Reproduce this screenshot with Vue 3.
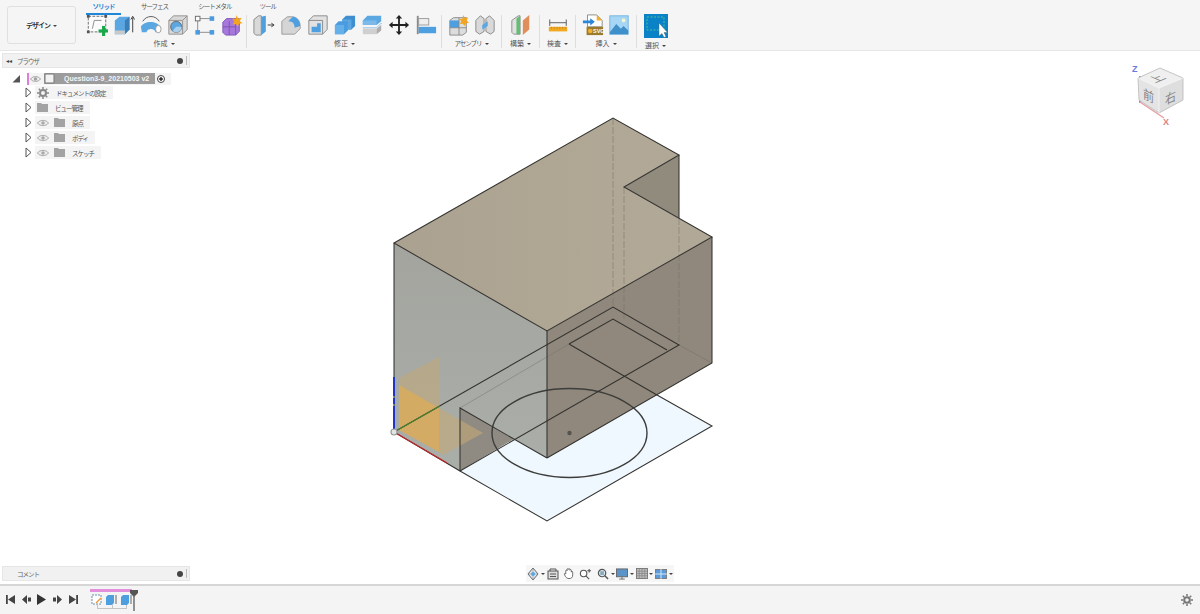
<script setup>
const tabs = [
  { label: 'ソリッド', active: true },
  { label: 'サーフェス' },
  { label: 'シート メタル' },
  { label: 'ツール' },
]
const rows = [
  { label: 'ドキュメントの設定', eye: false, gear: true },
  { label: 'ビュー管理', eye: false },
  { label: '原点', eye: true },
  { label: 'ボディ', eye: true },
  { label: 'スケッチ', eye: true },
]
</script>

<template>
  <div class="app">
    <header class="toolbar">
      <button class="design">デザイン<i class="caret"></i></button>
      <div class="ribbon">
        <nav class="tabs">
          <span v-for="t in tabs" :key="t.label" class="tab" :class="{ active: t.active }">{{ t.label }}</span>
        </nav>
        <div class="groups">
          <section class="group g-create">
            <div class="icons">
              <svg class="ic" viewBox="0 0 24 24"><rect x="2.500" y="2.500" width="19" height="17" fill="#fbfbfb" stroke="#666" stroke-dasharray="3 1.500"/><path d="M7 16L9 7H17" fill="none" stroke="#888"/><path d="M1 1h3v3H1zM20 1h3v3h-3zM1 18h3v3H1z" fill="#555"/><rect x="17.500" y="13" width="3.400" height="11" fill="#19a84a"/><rect x="13.700" y="16.800" width="10.300" height="3.400" fill="#19a84a"/></svg>
              <svg class="ic" viewBox="0 0 24 24"><path d="M2 7L7 3H18V17L13 22H2Z" fill="#5aa7e2"/><path d="M13 7V22L18 17V3Z" fill="#3b7fb8"/><path d="M2 18H13V22H2Z" fill="#c9c9c9"/><path d="M21.500 20V4M19.500 6L21.500 2.500L23.500 6" fill="none" stroke="#333"/></svg>
              <svg class="ic" viewBox="0 0 24 24"><path d="M3 8C7 1 17 1 21 8" fill="none" stroke="#555" stroke-width="1"/><path d="M1 14C4 7 19 7 22 14L21 20H17C16 15 8 15 7 20H2Z" fill="#5aa7e2"/><ellipse cx="20" cy="16.500" rx="3" ry="4" fill="#fff" stroke="#999"/></svg>
              <svg class="ic" viewBox="0 0 24 24"><path d="M2 7L7 2H22V17L17 22H2Z" fill="#d8d8d8" stroke="#8f8f8f"/><path d="M2 7H17V22M17 7L22 2" fill="none" stroke="#8f8f8f"/><circle cx="10" cy="14" r="6" fill="#5aa7e2" stroke="#666"/><path d="M10 14L16 14A6 6 0 0 1 6 18.500Z" fill="#a9cfee"/></svg>
              <svg class="ic" viewBox="0 0 24 24"><path d="M5 5H19M4 6V19M5 20H19" fill="none" stroke="#888"/><rect x="1.500" y="2.500" width="5" height="5" fill="#fff" stroke="#666"/><rect x="17" y="2.500" width="5" height="5" fill="#4a9be0"/><rect x="1.500" y="17.500" width="5" height="5" fill="#4a9be0"/><rect x="17" y="17.500" width="5" height="5" fill="#4a9be0"/></svg>
              <svg class="ic" viewBox="0 0 24 24"><path d="M2 9L6 5H20V19L16 23H5L2 20Z" fill="#a678dc" stroke="#8157b8"/><path d="M2 14H16M9 8V23M16 9V23" stroke="#7c52b4" fill="none"/><path d="M17 1L18.500 5L22.500 4L20.500 7.500L23.500 10L19.500 10.500L18.500 14L16 11L12.500 11.500L14.500 8L12 5L16 5.500Z" fill="#f3a51f"/></svg>
            </div>
            <div class="glabel">作成<i class="caret"></i></div>
          </section>
          <section class="group g-modify">
            <div class="icons">
              <svg class="ic" viewBox="0 0 24 24"><path d="M1 6L6 2H9V23H3L1 21Z" fill="#d9d9d9" stroke="#888"/><path d="M9 3L14 2V19L9 23Z" fill="#4d9fe0"/><path d="M16 12H22M20 10L23 12L20 14" fill="none" stroke="#333"/></svg>
              <svg class="ic" viewBox="0 0 24 24"><path d="M2 8L8 3H14C20 4 22 9 22 13V16L16 22H2Z" fill="#d5d5d5" stroke="#999"/><path d="M14 3C20 4 22 9 22 13L16 15C16 11 14 8 9 8Z" fill="#4d9fe0"/></svg>
              <svg class="ic" viewBox="0 0 24 24"><path d="M2 7L7 2H22V17L17 22H2Z" fill="#e2e2e2" stroke="#888"/><path d="M2 7H17V22" fill="none" stroke="#888"/><path d="M5 20V14H11V10H15V20Z" fill="#4d9fe0"/></svg>
              <svg class="ic" viewBox="0 0 24 24"><path d="M9 6L13 2H23V13L19 17H9Z" fill="#3f8fd0"/><path d="M9 6H19V17H9Z" fill="#5aa7e2"/><path d="M1 12L5 8H15V18L11 22H1Z" fill="#4a9be0"/><path d="M1 12H11V22H1Z" fill="#66b0ea"/></svg>
              <svg class="ic" viewBox="0 0 24 24"><path d="M2 7L7 2H22V8L17 12H2Z" fill="#5aa7e2"/><path d="M2 7H17V12H2Z" fill="#7ab9ea"/><path d="M2 15H17L22 10V11" fill="none" stroke="#8cc0ea"/><path d="M2 16H17V22H2Z" fill="#cfcfcf"/><path d="M17 16L22 12V18L17 22Z" fill="#adadad"/></svg>
              <svg class="ic" viewBox="0 0 24 24"><path d="M12 1L15.500 5H13V11H19V8.500L23 12L19 15.500V13H13V19H15.500L12 23L8.500 19H11V13H5V15.500L1 12L5 8.500V11H11V5H8.500Z" fill="#222"/></svg>
              <svg class="ic" viewBox="0 0 24 24"><rect x="2" y="2" width="2" height="20" fill="#8a8a8a"/><rect x="4" y="5" width="11" height="7" fill="#eee" stroke="#999"/><rect x="4" y="14" width="19" height="7" fill="#4d9fe0"/></svg>
            </div>
            <div class="glabel">修正<i class="caret"></i></div>
          </section>
          <section class="group g-assembly">
            <div class="icons tight">
              <svg class="ic" viewBox="0 0 24 24"><path d="M2 7L6 4H20V20L16 23H2Z" fill="#ddd" stroke="#888"/><path d="M2 7H12V15H2Z" fill="#4d9fe0"/><path d="M12 4V23M2 15H20" stroke="#888" fill="none"/><path d="M17 1L18.300 4.500L22 3.500L20.300 7L23 9.500L19.500 10L18.500 13L16 10.500L13 11L14.500 8L12.500 5.500L15.500 5.500Z" fill="#f3a51f"/></svg>
              <svg class="ic" viewBox="0 0 24 24"><path d="M2 7L7 2L11 5V19L6 22L2 19Z" fill="#d9d9d9" stroke="#888"/><path d="M22 7L17 2L13 5V19L18 22L22 19Z" fill="#d9d9d9" stroke="#888"/><path d="M9 12L15 8V13L9 17Z" fill="#5aa7e2"/></svg>
            </div>
            <div class="glabel kana">アセンブリ<i class="caret"></i></div>
          </section>
          <section class="group g-build">
            <div class="icons">
              <svg class="ic" viewBox="0 0 24 24"><path d="M2 7L9 2H11V22H4L2 20Z" fill="#e2e2e2" stroke="#8a8a8a"/><path d="M7 5L11 2V22L7 22Z" fill="#63bd73"/><path d="M14 7L21 1V17L14 23Z" fill="#e08f5c"/></svg>
            </div>
            <div class="glabel">構築<i class="caret"></i></div>
          </section>
          <section class="group g-inspect">
            <div class="icons">
              <svg class="ic" viewBox="0 0 24 24"><path d="M3 6V13M21 6V13M3 9.500H21" stroke="#555" fill="none"/><rect x="2" y="14" width="20" height="5" fill="#f2a922"/><path d="M5 14v2M8 14v2M11 14v2M14 14v2M17 14v2M20 14v2" stroke="#a9720f" stroke-width=".6"/></svg>
            </div>
            <div class="glabel">検査<i class="caret"></i></div>
          </section>
          <section class="group g-insert">
            <div class="icons tight">
              <svg class="ic" viewBox="0 0 24 24"><path d="M6 1H16L22 7V14H6Z" fill="#fff" stroke="#888"/><path d="M16 1V7H22Z" fill="#f0b030"/><path d="M1 7H9V4.500L14 8.500L9 12.500V10H1Z" fill="#2a86d8"/><rect x="5" y="14" width="18" height="9" fill="#9b7b2c"/><circle cx="9" cy="18.500" r="2.500" fill="#f0b030"/><text x="12" y="21" class="svgt">SVG</text></svg>
              <svg class="ic" viewBox="0 0 24 24"><rect x="2" y="2" width="20" height="20" fill="#a7d6f4" stroke="#6fb2e2"/><path d="M2 20L9 11L14 16L17 13L22 18V22H2Z" fill="#3f8fcb"/><circle cx="17" cy="7" r="2" fill="#f3f6d6"/></svg>
            </div>
            <div class="glabel">挿入<i class="caret"></i></div>
          </section>
          <section class="group g-select">
            <div class="icons">
              <svg class="ic" viewBox="0 0 24 24"><rect width="24" height="24" fill="#0a82c8"/><rect x="3" y="3" width="17" height="13" fill="none" stroke="#4ac09c" stroke-dasharray="2 1.500"/><path d="M15 9V22L18 19.500L20 23.500L22 22.500L20 18.500H23.500Z" fill="#fff" stroke="#555" stroke-width=".4"/></svg>
            </div>
            <div class="glabel">選択<i class="caret"></i></div>
          </section>
        </div>
      </div>
    </header>

    <main class="stage">
      <svg class="model" viewBox="0 0 1200 534" width="1200" height="534">
        <defs>
          <linearGradient id="topface" x1="0" x2="1" y1="0" y2="0">
            <stop offset="0" stop-color="#aba190"/>
            <stop offset=".5" stop-color="#b0a694"/>
            <stop offset="1" stop-color="#b1a998"/>
          </linearGradient>
          <linearGradient id="leftface" x1="0" x2="0" y1="0" y2="1">
            <stop offset="0" stop-color="#a3a49e"/>
            <stop offset="1" stop-color="#aaaea9"/>
          </linearGradient>
        </defs>
        <g transform="translate(0 -51)">
          <polygon points="460,471 514,439 547,458 657,395 712,426 547,521" fill="#eff8fe"/>
          <polygon points="394,243 547,331 547,458 514,439 460,408 460,471 394,432" fill="url(#leftface)"/>
          <polygon points="460,408 514,439 460,471" fill="#8f8b83"/>
          <polygon points="394,243 613,118 679,155 624,187 712,237 547,331" fill="url(#topface)"/>
          <polygon points="624,187 679,155 679,218" fill="#918b7e"/>
          <polygon points="547,331 712,237 712,363 547,458" fill="#90887c"/>
          <polygon points="399,378 439,357 439,408 399,431" fill="#c3a876" fill-opacity=".55"/>
          <polygon points="399,385 439,408 439,452 399,430" fill="#d7ab5d" fill-opacity=".9"/>
          <polygon points="439,408 483,433 443,455 439,452" fill="#c3a876" fill-opacity=".6"/>
          <g fill="none" stroke="#6f6a60" stroke-width="1" stroke-opacity=".45">
            <path d="M613 118V307" stroke-dasharray="7 2"/>
            <path d="M624 187V319" stroke-dasharray="7 2"/>
            <path d="M679 218V345" stroke-dasharray="7 2"/>
            <path d="M679 345L712 363"/>
            <path d="M460 408L569 344" stroke="#6e706b"/>
          </g>
          <g fill="none" stroke="#33322f" stroke-width="1.050">
            <ellipse cx="569.500" cy="433" rx="77.500" ry="44.500" stroke="#3d3d3b" stroke-width="1.400"/>
            <path d="M394 243L613 118L679 155L624 187L712 237L547 331L394 243Z"/>
            <path d="M679 155V218M712 237V363L547 458M547 331V458M394 243V432L460 471V408L547 458"/>
            <path d="M394 432L613 307L679 345L460 471"/>
            <path d="M569 344L613 319L667 350M569 344L624 376L657 395"/>
            <path d="M460 471L547 521L712 426L657 395"/>
          </g>
          <circle cx="569.500" cy="433" r="2.200" fill="#55534e"/>
          <path d="M394 432V377" stroke="#1f35c8" stroke-width="2" stroke-dasharray="26 2 6 2 20"/>
          <path d="M394 432L440 406" stroke="#4b8530" stroke-width="1.200"/>
          <path d="M394 432L447 463" stroke="#c02828" stroke-width="1.300"/>
          <circle cx="394" cy="432" r="3" fill="#e4e4e4" stroke="#9a9a9a" stroke-width="1.200"/>
        </g>
      </svg>

      <svg class="cube" viewBox="0 0 80 75" width="80" height="75">
        <path d="M20 48V21" stroke="#6a78e0" stroke-width="1.500"/>
        <path d="M20 47L44 63" stroke="#e7a0a0" stroke-width="1.500"/>
        <path d="M18 23L40 13L63 23L39 33Z" fill="#efefef"/>
        <path d="M18 23L39 33V58L19 45Z" fill="#e4e4e4"/>
        <path d="M63 23L39 33V58L63 45Z" fill="#dedede"/>
        <path d="M18 23L40 13L63 23V45L39 58L19 45Z" fill="none" stroke="#b8b8b8" stroke-width=".8"/>
        <path d="M18 23L39 33L63 23M39 33V58" fill="none" stroke="#f5f5f5" stroke-width=".8"/>
        <text x="12" y="17" class="cube-z">Z</text>
        <text x="43" y="70" class="cube-x">X</text>
        <text class="cube-t" transform="matrix(.9 -.38 .9 .38 35 28)">上</text>
        <text class="cube-t" transform="matrix(.85 .4 0 1 23 43)">前</text>
        <text class="cube-t" transform="matrix(.85 -.4 0 1 45 50)">右</text>
      </svg>

      <aside class="browser">
        <div class="panel-head">
          <span class="rew">◂◂</span>
          <span class="panel-title">ブラウザ</span>
          <span class="dot"></span>
          <span class="grip"></span>
        </div>
        <div class="root-row">
          <svg class="corner" viewBox="0 0 9 9" width="9" height="9"><path d="M0.500 8.500L8 1V8.500Z" fill="#555"/></svg>
          <div class="root-chip">
            <span class="pink"></span>
            <svg class="eye" viewBox="0 0 12 8" width="11" height="8"><path d="M0.500 4C3 0.500 9 0.500 11.500 4C9 7.500 3 7.500 0.500 4Z" fill="#eee" stroke="#a0a0a0"/><circle cx="6" cy="4" r="1.800" fill="#a0a0a0"/></svg>
            <svg class="doc" viewBox="0 0 11 11" width="11" height="11"><rect x="1" y="1" width="9" height="9" rx="1" fill="#f2f2f2" stroke="#777"/></svg>
            <span class="root-label">Question3-9_20210503 v2</span>
            <span class="radio"></span>
          </div>
        </div>
        <div v-for="r in rows" :key="r.label" class="row">
          <svg class="tri" viewBox="0 0 7 11" width="7" height="11"><path d="M1 1L6 5.500L1 10Z" fill="#fff" stroke="#555"/></svg>
          <div class="chip">
            <svg v-if="r.eye" class="eye" viewBox="0 0 12 8" width="12" height="8"><path d="M0.500 4C3 0.500 9 0.500 11.500 4C9 7.500 3 7.500 0.500 4Z" fill="#eee" stroke="#aaa"/><circle cx="6" cy="4" r="1.800" fill="#aaa"/></svg>
            <svg v-if="r.gear" class="folder" viewBox="0 0 12 12" width="12" height="12"><circle cx="6" cy="6" r="3" fill="none" stroke="#888" stroke-width="2"/><path d="M6 0V12M0 6H12M1.800 1.800L10.200 10.200M10.200 1.800L1.800 10.200" stroke="#888" stroke-width="1.500" stroke-dasharray="2 8"/></svg>
            <svg v-else class="folder" viewBox="0 0 11 9" width="11" height="9"><path d="M0 0H4L5 1H11V9H0Z" fill="#a3a3a3"/></svg>
            <span class="row-label">{{ r.label }}</span>
          </div>
        </div>
      </aside>

      <aside class="comment">
        <div class="panel-head">
          <span class="panel-title comment-title">コメント</span>
          <span class="dot"></span>
          <span class="grip"></span>
        </div>
      </aside>

      <div class="navbar">
        <svg class="nb" width="12" height="14" viewBox="0 0 12 14"><path d="M6 1L11 7L6 13L1 7Z" fill="#dfe9f2" stroke="#666"/><path d="M6 1V13M1 7H11" stroke="#888" stroke-width=".6"/><circle cx="6" cy="7" r="2" fill="#5aa7e2"/></svg><i class="caret n"></i>
        <svg class="nb m2" width="12" height="12" viewBox="0 0 12 12"><rect x="1" y="3" width="10" height="8" fill="#ddd" stroke="#555"/><path d="M3 3V1H9V3M3 6H9M3 8.500H9" stroke="#555" fill="none"/></svg>
        <svg class="nb m4" width="12" height="13" viewBox="0 0 13 13"><path d="M3 7V3.500C3 2.500 4.500 2.500 4.500 3.500V2C4.500 1 6 1 6 2V2C6 1 7.500 1 7.500 2V3C7.500 2 9 2 9 3V5C9 4 10.500 4 10.500 5V8C10.500 11 9 12 6.500 12C4.500 12 3.500 11 2.500 9.500L1.500 7.500C1 6.500 2.300 6 3 7Z" fill="#fff" stroke="#555" stroke-width=".9"/></svg>
        <svg class="nb m4" width="12" height="12" viewBox="0 0 13 13"><circle cx="5" cy="6" r="3.500" fill="#fff" stroke="#555" stroke-width="1.200"/><path d="M7.500 8.500L11 12M11 1V5M9 3H13" stroke="#555" stroke-width="1.200"/></svg>
        <svg class="nb m6" width="12" height="12" viewBox="0 0 13 13"><circle cx="5.500" cy="5.500" r="4" fill="#dce8f2" stroke="#555" stroke-width="1.300"/><rect x="3.500" y="3.500" width="4" height="4" fill="#8ab" /><path d="M8.500 8.500L12 12" stroke="#555" stroke-width="1.600"/></svg><i class="caret n"></i>
        <svg class="nb m1" width="12" height="12" viewBox="0 0 13 13"><rect x="0.500" y="1" width="12" height="8.500" fill="#5a94c8" stroke="#666"/><path d="M6.500 9.500V12M3.500 12H9.500" stroke="#666"/></svg><i class="caret n"></i>
        <svg class="nb m2" width="12" height="11" viewBox="0 0 13 12"><rect x="0.500" y="0.500" width="12" height="11" fill="#bbb" stroke="#777"/><path d="M0 3.500H13M0 6H13M0 8.500H13M3.500 0V12M6.500 0V12M9.500 0V12" stroke="#777" stroke-width=".6"/></svg><i class="caret n tight-c"></i>
        <svg class="nb m2" width="12" height="10" viewBox="0 0 13 11"><rect x="0.500" y="0.500" width="12" height="10" fill="#5a9bd8" stroke="#777"/><path d="M6.500 0V11M0 5.500H13" stroke="#e6f0fa"/></svg><i class="caret n"></i>
      </div>
    </main>

    <footer class="timeline">
      <div class="controls">
        <svg width="9" height="9" viewBox="0 0 9 9"><path d="M0 0H1.800V9H0ZM9 0V9L2 4.500Z" fill="#444"/></svg>
        <svg width="9" height="9" viewBox="0 0 9 9"><path d="M5 0V9L0 4.500ZM6 2.500H9V6.500H6Z" fill="#444"/></svg>
        <svg width="9" height="11" viewBox="0 0 9 11"><path d="M0 0L9 5.500L0 11Z" fill="#333"/></svg>
        <svg width="9" height="9" viewBox="0 0 9 9"><path d="M4 0V9L9 4.500ZM0 2.500H3V6.500H0Z" fill="#444"/></svg>
        <svg width="9" height="9" viewBox="0 0 9 9"><path d="M0 0V9L7 4.500ZM7.200 0H9V9H7.200Z" fill="#444"/></svg>
      </div>
      <div class="track">
        <div class="pinkbar"></div>
        <div class="steps">
          <svg width="11" height="11" viewBox="0 0 11 11"><rect x="1" y="1" width="9" height="9" fill="#fff" stroke="#6a8caa" stroke-dasharray="2 1"/><path d="M5 9L10 4" stroke="#ef9d3c" stroke-width="1.500"/></svg>
          <svg width="11" height="11" viewBox="0 0 11 11"><path d="M0 3L2 1H8V9L6 11H0Z" fill="#4d9fe0"/><path d="M10 10V1" stroke="#444" stroke-width=".8"/></svg>
          <svg width="11" height="11" viewBox="0 0 11 11"><path d="M0 3L2 1H8V9L6 11H0Z" fill="#4d9fe0"/><path d="M10 10V1" stroke="#444" stroke-width=".8"/></svg>
        </div>
        <div class="brackets"></div>
        <svg class="marker" width="8" height="21" viewBox="0 0 8 21"><path d="M0 0H8V3L4 7L0 3Z" fill="#555"/><rect x="3.300" y="5" width="1.400" height="16" fill="#666"/></svg>
      </div>
      <svg class="gear" viewBox="0 0 12 12" width="12" height="12"><circle cx="6" cy="6" r="2.800" fill="none" stroke="#777" stroke-width="2"/><path d="M6 0V12M0 6H12M1.800 1.800L10.200 10.200M10.200 1.800L1.800 10.200" stroke="#777" stroke-width="1.500" stroke-dasharray="2 8"/></svg>
    </footer>
  </div>
</template>

<style>
html, body { margin: 0; background: #fff; }
</style>

<style scoped>
.app {
  width: 1200px;
  height: 614px;
  display: flex;
  flex-direction: column;
  overflow: hidden;
  background: #fff;
  font-family: "Noto Sans CJK JP", "Noto Sans", sans-serif;
  color: #444;
}
.toolbar {
  height: 51px;
  flex: none;
  box-sizing: border-box;
  display: flex;
  background: #f5f5f5;
  border-bottom: 1px solid #e6e6e6;
  padding: 6px 0 0 7px;
}
.design {
  width: 69px;
  height: 38px;
  box-sizing: border-box;
  border: 1px solid #e0e0e0;
  border-radius: 3px;
  background: #f5f5f5;
  font: 700 7px "Noto Sans CJK JP", sans-serif;
  letter-spacing: -1px;
  color: #333;
  padding: 0;
}
.caret {
  display: inline-block;
  width: 0;
  height: 0;
  margin-left: 3px;
  vertical-align: 1px;
  border-left: 2px solid transparent;
  border-right: 2px solid transparent;
  border-top: 2.500px solid #444;
}
.ribbon {
  margin: -6px 0 0 6px;
  display: flex;
  flex-direction: column;
}
.tabs {
  height: 15px;
  box-sizing: border-box;
  display: flex;
  padding-left: 4px;
}
.tab {
  font-size: 6.500px;
  letter-spacing: -1px;
  line-height: 12px;
  text-align: center;
  white-space: nowrap;
  color: #555;
  flex: none;
}
.tab:nth-child(2) { margin-left: 20px; }
.tab:nth-child(3) { margin-left: 30px; }
.tab:nth-child(4) { margin-left: 28px; }
.tab.active {
  width: 35px;
  color: #1f86d8;
  font-weight: 700;
  height: 15px;
  box-sizing: border-box;
  border-bottom: 2px solid #1f86d8;
}
.groups { display: flex; height: 35px; }
.group {
  box-sizing: border-box;
  display: flex;
  flex-direction: column;
  align-items: center;
  border-right: 1px solid #dedede;
  height: 33px;
}
.g-create { width: 165px; }
.g-modify { width: 195px; padding-left: 1px; }
.g-assembly { width: 60px; }
.g-build { width: 38px; }
.g-inspect { width: 36px; }
.g-insert { width: 61px; }
.g-select { width: 39px; border-right: none; padding-right: 2px; }
.icons {
  display: flex;
  gap: 5px;
  height: 24px;
  align-items: center;
  margin-top: -1px;
}
.icons.tight { gap: 4px; }
.ic { width: 22px; height: 22px; flex: none; display: block; }
.g-select .ic { width: 24px; height: 24px; }
.svgt { font: 700 6px "Liberation Sans", sans-serif; fill: #fff; }
.glabel {
  font-size: 7px;
  line-height: 10px;
  margin-top: 2px;
  white-space: nowrap;
  color: #555;
}
.glabel.kana { font-size: 6.500px; letter-spacing: -1px; }
.stage { position: relative; flex: 1; min-height: 0; }
.model { position: absolute; left: 0; top: 0; }
.cube { position: absolute; left: 1120px; top: 4px; }
.cube-z { font: 700 9px "Liberation Sans", sans-serif; fill: #6a78e0; }
.cube-x { font: 700 9px "Liberation Sans", sans-serif; fill: #e08080; }
.cube-t { font: 13px "Noto Sans CJK JP", sans-serif; fill: #858585; }
.browser {
  position: absolute;
  left: 2px;
  top: 2px;
  width: 188px;
}
.comment {
  position: absolute;
  left: 2px;
  top: 515px;
  width: 188px;
}
.panel-head {
  height: 15px;
  box-sizing: border-box;
  background: #f1f1f1;
  border: 1px solid #e6e6e6;
  display: flex;
  align-items: center;
  padding: 0 2px 0 3px;
  font-size: 6.500px;
  letter-spacing: -1px;
  color: #666;
}
.rew { font-size: 6px; width: 11px; color: #444; line-height: 1; letter-spacing: 0; }
.panel-title { flex: 1; white-space: nowrap; }
.comment-title { padding-left: 11px; }
.dot {
  width: 6px;
  height: 6px;
  border-radius: 50%;
  background: #444;
  margin-right: 3px;
}
.grip { width: 1px; height: 9px; background: #bbb; }
.root-row {
  display: flex;
  align-items: center;
  height: 13px;
  margin-top: 4px;
  padding-left: 10px;
}
.corner { margin-right: 6px; }
.root-chip {
  display: flex;
  align-items: center;
  background: #f4f4f4;
  height: 12px;
  width: 144px;
}
.pink { width: 2px; height: 12px; background: #dd7fd8; margin-right: 1px; }
.root-chip .eye { margin-right: 3px; }
.doc { position: relative; z-index: 1; }
.root-label {
  background: #9c9c9c;
  color: #f4f4f4;
  font: 700 7px/11px "Liberation Sans", sans-serif;
  height: 11px;
  width: 111px;
  box-sizing: border-box;
  padding-left: 20px;
  margin-left: -11px;
  white-space: nowrap;
}
.radio {
  width: 8px;
  height: 8px;
  box-sizing: border-box;
  border-radius: 50%;
  border: 1px solid #444;
  background: radial-gradient(circle, #333 0 1.500px, #fff 1.800px);
  margin-left: 2px;
}
.row {
  display: flex;
  align-items: center;
  height: 15px;
  padding-left: 23px;
}
.tri { margin-right: 3px; flex: none; }
.chip {
  display: flex;
  align-items: center;
  background: #f4f4f4;
  height: 13px;
  padding: 0 7px 0 2px;
  gap: 5px;
}
.row-label { font-size: 6.500px; letter-spacing: -1px; color: #555; white-space: nowrap; margin-left: 2px; }
.navbar {
  position: absolute;
  left: 526px;
  top: 514px;
  width: 148px;
  height: 17px;
  background: #f6f6f6;
  display: flex;
  align-items: center;
  padding-left: 1px;
  box-sizing: border-box;
}
.nb { flex: none; }
.m1 { margin-left: 1px; }
.m2 { margin-left: 2px; }
.m4 { margin-left: 4px; }
.m6 { margin-left: 6px; }
.navbar .caret.n { margin-left: 2px; vertical-align: 0; flex: none; }
.navbar .caret.tight-c { margin-left: 1px; }
.timeline {
  height: 30px;
  flex: none;
  box-sizing: border-box;
  background: #f4f4f4;
  border-top: 2px solid #d6d6d6;
  padding-bottom: 2px;
  display: flex;
  align-items: center;
  position: relative;
}
.controls {
  display: flex;
  gap: 6.700px;
  align-items: center;
  margin-left: 6px;
  width: 84px;
  height: 26px;
}
.track { position: relative; width: 50px; height: 26px; }
.pinkbar {
  position: absolute;
  left: 0;
  top: 3px;
  width: 42px;
  height: 3px;
  background: #e48fdc;
}
.steps {
  position: absolute;
  left: 1px;
  top: 8px;
  display: flex;
  gap: 4px;
}
.brackets {
  position: absolute;
  left: 7px;
  top: 19px;
  width: 30px;
  height: 4px;
  box-sizing: border-box;
  border: 1px solid #c4c4c4;
  border-top: none;
  background: linear-gradient(#c4c4c4, #c4c4c4) center / 1px 100% no-repeat;
}
.marker { position: absolute; left: 40px; top: 4px; }
.gear { position: absolute; right: 7px; top: 8px; }
</style>
